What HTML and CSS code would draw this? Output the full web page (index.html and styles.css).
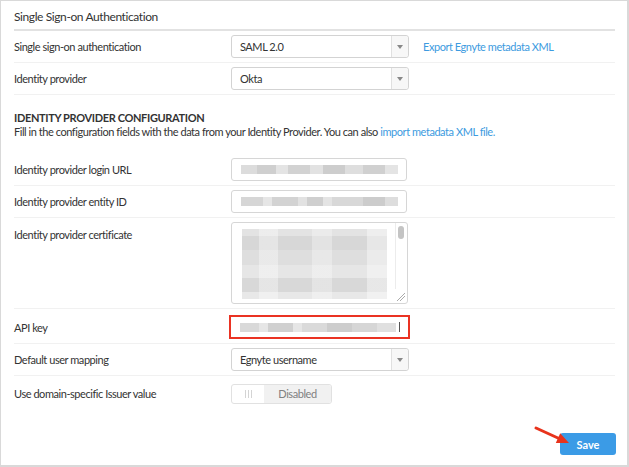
FILE: index.html
```html
<!DOCTYPE html>
<html lang="en">
<head>
  <meta charset="UTF-8">
  <title>Single Sign-on Authentication</title>
  <link rel="stylesheet" href="styles.css">
</head>
<body>
<div class="panel">
  <div class="panel-title">Single Sign-on Authentication</div>

  <div class="row">
    <div class="label">Single sign-on authentication</div>
    <div class="select"><span>SAML 2.0</span><i class="caret"></i></div>
    <a class="link export">Export Egnyte metadata XML</a>
  </div>
  <div class="row">
    <div class="label">Identity provider</div>
    <div class="select"><span>Okta</span><i class="caret"></i></div>
  </div>

  <div class="config">
    <div class="config-title">IDENTITY PROVIDER CONFIGURATION</div>
    <div class="config-desc">Fill in the configuration fields with the data from your Identity Provider. You can also <a class="link">import metadata XML file.</a></div>
  </div>

  <div class="row">
    <div class="label">Identity provider login URL</div>
    <div class="input"><span class="blur b1"></span></div>
  </div>
  <div class="row">
    <div class="label">Identity provider entity ID</div>
    <div class="input"><span class="blur b2"></span></div>
  </div>
  <div class="row top">
    <div class="label">Identity provider certificate</div>
    <div class="textarea">
      <div class="cert"></div>
      <div class="scroll"><i class="thumb"></i></div>
      <i class="grip"></i>
    </div>
  </div>
  <div class="row api">
    <div class="label">API key</div>
    <div class="input focus"><span class="blur b3"></span><i class="cursor"></i></div>
  </div>
  <div class="row">
    <div class="label">Default user mapping</div>
    <div class="select"><span>Egnyte username</span><i class="caret"></i></div>
  </div>
  <div class="row last">
    <div class="label">Use domain-specific Issuer value</div>
    <div class="toggle"><span class="knob"><i></i><i></i><i></i></span><span class="state">Disabled</span></div>
  </div>

  <div class="footer">
    <svg class="arrow" width="40" height="22" viewBox="0 0 40 22">
      <path d="M2 2 L25 12.5" stroke="#e8331c" stroke-width="3" stroke-linecap="round"/>
      <path d="M26.2 7.2 L35 17 L21.8 16.9 Z" fill="#e8331c"/>
    </svg>
    <button class="save">Save</button>
  </div>
</div>
</body>
</html>
```

FILE: styles.css
```css
body {
  margin: 0;
  background: #fff;
  font-family: "Lato", "Open Sans", sans-serif;
  font-size: 11px;
  letter-spacing: -0.45px;
  color: #333;
}

.panel {
  box-sizing: border-box;
  width: 629px;
  height: 467px;
  border: 1px solid #d9d9d9;
  border-width: 1px 2px 2px 1px;
  padding: 0 12px 0 13px;
  position: relative;
}

.panel-title {
  font-size: 12px;
  letter-spacing: -0.4px;
  height: 28px;
  line-height: 31px;
  border-bottom: 2px solid #e2e2e2;
}

.row {
  display: flex;
  align-items: center;
  padding: 4px 0;
  min-height: 23px;
  border-bottom: 1px solid #f1f1f1;
}

.row.top {
  align-items: flex-start;
}

.row.top .label {
  padding-top: 6px;
}

.row.api {
  padding: 6px 0 4px;
}

.row.last {
  border-bottom: none;
  padding-top: 6px;
}

.label {
  width: 217px;
  flex: none;
}

.select {
  width: 168px;
  height: 21px;
  border: 1px solid #d3d3d3;
  border-radius: 3px;
  display: flex;
  align-items: center;
  padding-left: 8px;
}

.select span {
  flex: 1;
}

.caret {
  width: 16px;
  height: 21px;
  border-left: 1px solid #e0e0e0;
  background: #f7f7f7;
  border-radius: 0 3px 3px 0;
  position: relative;
}

.caret::after {
  content: "";
  position: absolute;
  left: 5px;
  top: 9px;
  border: 3px solid transparent;
  border-top: 4px solid #888;
  border-bottom: none;
}

.link {
  color: #3d9be0;
  text-decoration: none;
}

.export {
  margin-left: 14px;
}

.config {
  padding: 16px 0 15px;
}

.config-title {
  font-weight: bold;
  line-height: 14px;
  letter-spacing: -0.35px;
}

.config-desc {
  line-height: 14px;
}

.input {
  box-sizing: border-box;
  width: 176px;
  height: 23px;
  border: 1px solid #d6d6d6;
  border-radius: 3px;
  display: flex;
  align-items: center;
  padding: 0 8px 0 9px;
}

.input.focus {
  border: 2px solid #ea3323;
  border-radius: 0;
  width: 181px;
  height: 24px;
  margin-left: -2px;
}

.blur {
  display: block;
  height: 9px;
  flex: 1;
  background: linear-gradient(90deg, #dcdcdc 0 10%, #cfcfcf 10% 22%, #e4e4e4 22% 30%, #d2d2d2 30% 44%, #e2e2e2 44% 52%, #cdcdcd 52% 66%, #dedede 66% 78%, #d0d0d0 78% 92%, #e4e4e4 92%);
}

.blur.b2 {
  background: linear-gradient(90deg, #d6d6d6 0 14%, #e6e6e6 14% 20%, #d3d3d3 20% 36%, #e2e2e2 36% 42%, #cfcfcf 42% 52%, #e4e4e4 52% 58%, #d8d8d8 58% 78%, #cccccc 78% 92%, #dddddd 92%);
}

.blur.b3 {
  background: linear-gradient(90deg, #d9d9d9 0 12%, #e6e6e6 12% 18%, #d0d0d0 18% 34%, #e6e6e6 34% 40%, #dadada 40% 56%, #cdcdcd 56% 72%, #d6d6d6 72% 88%, #e0e0e0 88%);
}

.cursor {
  width: 1px;
  height: 10px;
  background: #555;
  margin-left: 3px;
}

.textarea {
  box-sizing: border-box;
  width: 177px;
  height: 82px;
  border: 1px solid #d6d6d6;
  border-radius: 3px;
  position: relative;
}

.cert {
  position: absolute;
  left: 10px;
  top: 6px;
  width: 145px;
  height: 70px;
  background:
    linear-gradient(90deg, rgba(255,255,255,0) 0 12%, rgba(255,255,255,.35) 12% 25%, rgba(255,255,255,0) 25% 48%, rgba(255,255,255,.3) 48% 62%, rgba(255,255,255,0) 62% 86%, rgba(255,255,255,.4) 86%),
    linear-gradient(#e3e3e3 0 10%, #d7d7d7 10% 30%, #dedede 30% 52%, #e6e6e6 52% 70%, #d8d8d8 70% 90%, #e8e8e8 90%);
}

.scroll {
  position: absolute;
  right: 0;
  top: 0;
  bottom: 14px;
  width: 11px;
  border-left: 1px solid #ececec;
}

.thumb {
  position: absolute;
  left: 2px;
  top: 3px;
  width: 6px;
  height: 13px;
  border-radius: 3px;
  background: #c4c4c4;
}

.grip {
  position: absolute;
  right: 2px;
  bottom: 2px;
  width: 8px;
  height: 8px;
  background: linear-gradient(135deg, transparent 0 45%, #aaa 45% 52%, transparent 52% 68%, #aaa 68% 75%, transparent 75%);
}

.toggle {
  box-sizing: border-box;
  display: flex;
  width: 101px;
  height: 20px;
  border: 1px solid #e1e1e1;
  border-radius: 3px;
  overflow: hidden;
}

.knob {
  width: 32px;
  display: flex;
  justify-content: center;
  align-items: center;
  gap: 2px;
}

.knob i {
  width: 1px;
  height: 8px;
  background: #d4d4d4;
}

.state {
  flex: 1;
  background: #f1f1f1;
  color: #808080;
  text-align: center;
  line-height: 18px;
}

.footer {
  position: absolute;
  right: 11px;
  bottom: 10px;
}

.save {
  display: block;
  background: #3b9be6;
  color: #fff;
  border: none;
  border-radius: 3px;
  width: 56px;
  height: 22px;
  font-family: "Lato", sans-serif;
  font-weight: bold;
  font-size: 11px;
}

.arrow {
  position: absolute;
  left: -26px;
  top: -7px;
}
```
